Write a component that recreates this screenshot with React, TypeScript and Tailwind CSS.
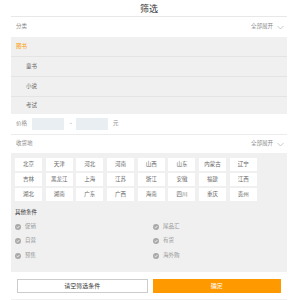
import React from "react";

const font = { fontFamily: '"Noto Sans CJK SC", "Noto Sans", sans-serif' };

function Chevron() {
  return (
    <svg width="7" height="5" viewBox="0 0 7 5" className="ml-[4px]">
      <polyline points="0.5,1 3.5,4 6.5,1" fill="none" stroke="#bbb" strokeWidth="0.8" />
    </svg>
  );
}

function Check() {
  return (
    <svg width="6" height="6" viewBox="0 0 6 6" className="mr-[4px]">
      <circle cx="3" cy="3" r="3" fill="#a8a8a8" />
      <polyline points="1.6,3.1 2.6,4 4.4,2" fill="none" stroke="#fff" strokeWidth="0.8" />
    </svg>
  );
}

const cities = [
  "北京", "天津", "河北", "河南", "山西", "山东", "内蒙古", "辽宁",
  "吉林", "黑龙江", "上海", "江苏", "浙江", "安徽", "福建", "江西",
  "湖北", "湖南", "广东", "广西", "海南", "四川", "重庆", "贵州",
];

export default function App() {
  return (
    <div className="w-[300px] h-[300px] bg-white overflow-hidden" style={font}>
      <div className="ml-[11px] mr-[13px] flex flex-col">
        <div className="h-[17px] flex items-center justify-center border-b border-[#e8e8e8] text-[9px] text-[#333] leading-none">
          筛选
        </div>
        <div className="h-[20px] flex items-center justify-between pl-[5px] pr-[3px] text-[5.5px] text-[#888] leading-none">
          <span>分类</span>
          <span className="flex items-center">全部展开<Chevron /></span>
        </div>
        <div className="bg-[#f0f0f0] text-[5.5px] leading-none">
          <div className="h-[20px] flex items-center pl-[5px] border-b border-[#e4e4e4] text-[#ff9900]">图书</div>
          <div className="h-[20px] flex items-center pl-[15px] border-b border-[#e4e4e4] text-[#666]">童书</div>
          <div className="h-[20px] flex items-center pl-[15px] border-b border-[#e4e4e4] text-[#666]">小说</div>
          <div className="h-[17px] flex items-center pl-[15px] text-[#666]">考试</div>
        </div>
        <div className="h-[21px] flex items-center pl-[5px] border-b border-[#ececec] text-[5.5px] text-[#888] leading-none">
          <span>价格</span>
          <div className="ml-[5px] w-[32px] h-[12px] bg-[#e9eef3]" />
          <span className="ml-[5px] text-[#999]">~</span>
          <div className="ml-[4px] w-[32px] h-[12px] bg-[#e9eef3]" />
          <span className="ml-[5px]">元</span>
        </div>
        <div className="h-[18px] flex items-center justify-between pl-[5px] pr-[3px] text-[5.5px] text-[#888] leading-none">
          <span>收货地</span>
          <span className="flex items-center">全部展开<Chevron /></span>
        </div>
        <div className="h-[119px] bg-[#f0f0f0] pt-[5px] pl-[4px] text-[5.5px] leading-none">
          <div className="grid grid-cols-[repeat(8,27px)] gap-x-[3.7px] gap-y-[2px]">
            {cities.map((c) => (
              <div key={c} className="h-[13px] bg-white flex items-center justify-center text-[#666]">
                {c}
              </div>
            ))}
          </div>
          <div className="mt-[9px] text-[#333]">其他条件</div>
          <div className="mt-[8px] grid grid-cols-[138px_1fr] gap-y-[8.5px] text-[#999]">
            {["促销", "尾品汇", "自营", "有货", "预售", "海外购"].map((t) => (
              <div key={t} className="flex items-center h-[6px]">
                <Check />
                {t}
              </div>
            ))}
          </div>
        </div>
        <div className="h-[28px] flex items-center gap-[5px] px-[6px] border-b border-[#f0f0f0]">
          <div className="flex-1 h-[14px] border border-[#ccc] flex items-center justify-center text-[6px] text-[#333] leading-none">
            请空筛选条件
          </div>
          <div className="flex-1 h-[14px] bg-[#ff9900] flex items-center justify-center text-[6px] text-white leading-none">
            确定
          </div>
        </div>
      </div>
    </div>
  );
}
